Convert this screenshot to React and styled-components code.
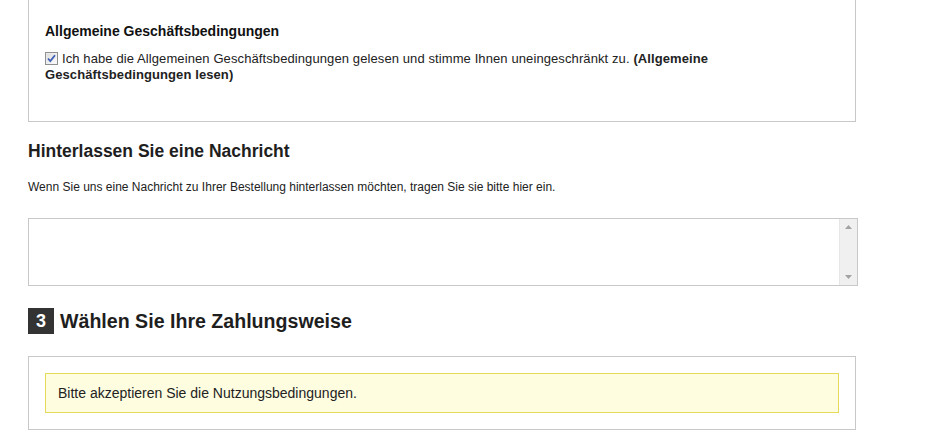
import React from "react";
import styled, { createGlobalStyle } from "styled-components";

const GlobalStyle = createGlobalStyle`
  html, body {
    margin: 0;
    padding: 0;
    background: #fff;
  }
  body {
    font-family: "Liberation Sans", Arial, sans-serif;
    color: #222;
  }
`;

const Page = styled.div`
  padding-left: 28px;
  width: 830px;
  overflow: hidden;
  height: 434px;
`;

const Box = styled.div`
  box-sizing: border-box;
  width: 828px;
  border: 1px solid #c8c8c8;
  padding: 16px;
`;

const TermsBox = styled(Box)`
  margin-top: -1px;
  padding-top: 22px;
  padding-bottom: 38px;
`;

const BoxTitle = styled.h4`
  margin: 0 0 11px;
  font-size: 14px;
  line-height: 18px;
  font-weight: bold;
  color: #111;
`;

const CheckLabel = styled.label`
  display: block;
  font-size: 13px;
  line-height: 16px;
  letter-spacing: 0.1px;
  color: #222;
`;

const CheckMark = styled.span`
  display: inline-block;
  width: 13px;
  height: 13px;
  margin-right: 4px;
  vertical-align: -2px;

  svg {
    display: block;
  }
`;

const Strong = styled.strong`
  font-weight: bold;
`;

const SectionTitle = styled.h3`
  margin: 18px 0 0;
  font-size: 17.5px;
  line-height: 22px;
  font-weight: bold;
  color: #1e1e1e;
`;

const Hint = styled.p`
  margin: 18px 0 0;
  font-size: 12px;
  line-height: 14px;
  color: #222;
`;

const TextareaWrap = styled.div`
  margin-top: 24px;
  box-sizing: border-box;
  width: 830px;
  height: 68px;
  border: 1px solid #c8c8c8;
  display: flex;
`;

const Message = styled.textarea`
  flex: 1;
  border: none;
  outline: none;
  resize: none;
  overflow: hidden;
  padding: 4px 6px;
  font-family: "Liberation Sans", Arial, sans-serif;
  font-size: 13px;
`;

const ScrollTrack = styled.div`
  width: 17px;
  background: #f0f0f0;
  border-left: 1px solid #e6e6e6;
  display: flex;
  flex-direction: column;
  justify-content: space-between;
  align-items: center;
  padding: 6px 0;
`;

const StepHeading = styled.h2`
  margin: 22px 0 0;
  display: flex;
  align-items: center;
  gap: 6px;
  font-size: 19.6px;
  line-height: 26px;
  font-weight: bold;
  color: #1e1e1e;
`;

const StepBadge = styled.span`
  width: 26px;
  height: 26px;
  background: #333;
  color: #fff;
  font-size: 18px;
  line-height: 26px;
  text-align: center;
`;

const PaymentBox = styled(Box)`
  margin-top: 22px;
`;

const Notice = styled.div`
  border: 1px solid #e5da5b;
  background: #fffde0;
  padding: 11px 12px;
  font-size: 14px;
  line-height: 16px;
  color: #222;
`;

const Arrow = ({ up }) => (
  <svg width="7" height="4" viewBox="0 0 7 4">
    <path d={up ? "M3.5 0 L7 4 L0 4 Z" : "M0 0 L7 0 L3.5 4 Z"} fill="#a3a3a3" />
  </svg>
);

const Checkbox = () => (
  <CheckMark>
    <svg width="13" height="13" viewBox="0 0 13 13">
      <defs>
        <linearGradient id="cb" x1="0" y1="0" x2="1" y2="1">
          <stop offset="0" stopColor="#dcdcdc" />
          <stop offset="1" stopColor="#fbfbfb" />
        </linearGradient>
      </defs>
      <rect x="0.5" y="0.5" width="12" height="12" fill="#f4f4f4" stroke="#8e8f8f" />
      <rect x="1.5" y="1.5" width="10" height="10" fill="url(#cb)" />
      <path d="M3 6.5 L5.3 9 L10 3.2" fill="none" stroke="#3d5fb5" strokeWidth="1.8" />
    </svg>
  </CheckMark>
);

const App = () => {
  return (
    <>
      <GlobalStyle />
      <Page>
        <TermsBox>
          <BoxTitle>Allgemeine Geschäftsbedingungen</BoxTitle>
          <CheckLabel>
            <Checkbox />
            Ich habe die Allgemeinen Geschäftsbedingungen gelesen und stimme
            Ihnen uneingeschränkt zu.{" "}
            <Strong>(Allgemeine Geschäftsbedingungen lesen)</Strong>
          </CheckLabel>
        </TermsBox>

        <SectionTitle>Hinterlassen Sie eine Nachricht</SectionTitle>
        <Hint>
          Wenn Sie uns eine Nachricht zu Ihrer Bestellung hinterlassen möchten,
          tragen Sie sie bitte hier ein.
        </Hint>
        <TextareaWrap>
          <Message />
          <ScrollTrack>
            <Arrow up />
            <Arrow />
          </ScrollTrack>
        </TextareaWrap>

        <StepHeading>
          <StepBadge>3</StepBadge>
          Wählen Sie Ihre Zahlungsweise
        </StepHeading>
        <PaymentBox>
          <Notice>Bitte akzeptieren Sie die Nutzungsbedingungen.</Notice>
        </PaymentBox>
      </Page>
    </>
  );
};

export default App;
